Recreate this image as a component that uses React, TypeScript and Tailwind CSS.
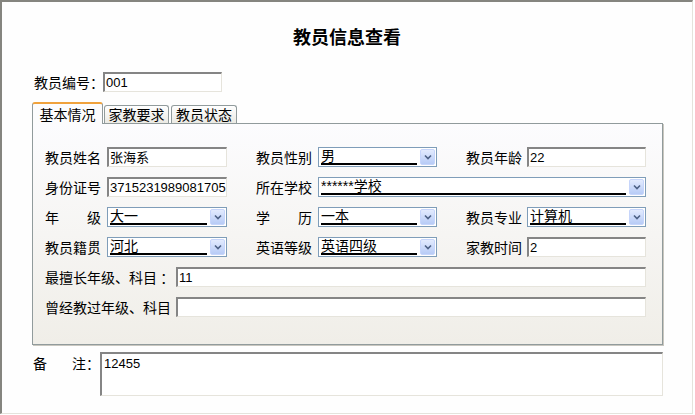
import React from 'react';

const cjk = "font-['Noto_Sans_CJK_SC',sans-serif]";
const mixed = "font-['Liberation_Sans','Noto_Sans_CJK_SC',sans-serif]";

function TextBox({ value, w, h = 'h-[20px]' }: { value: string; w: string; h?: string }) {
  return (
    <div
      className={`${w} ${h} shrink-0 overflow-hidden whitespace-nowrap bg-white border-t-2 border-l-2 border-r border-b border-t-[#858585] border-l-[#858585] border-r-[#e6e4dc] border-b-[#e6e4dc] pl-[1px] text-[13px] leading-[17px] text-black ${mixed}`}
    >
      {value}
    </div>
  );
}

function Select({ value, w }: { value: string; w: string }) {
  return (
    <div className={`${w} h-[20px] shrink-0 flex items-stretch border border-[#7f9db9] bg-white p-[1px]`}>
      <div className={`flex-1 ml-[1px] mr-[3px] overflow-hidden whitespace-nowrap border-b-2 border-b-black text-[14px] leading-[15px] text-black ${mixed}`}>
        {value}
      </div>
      <div className="w-[15px] flex items-center justify-center rounded-[2px] border border-[#c6d5fb] bg-linear-to-b from-[#e3ebfe] to-[#b7cbf6]">
        <svg width="8" height="6" viewBox="0 0 8 6">
          <path d="M1 1.5 L4 4.5 L7 1.5" stroke="#4d6185" strokeWidth="1.6" fill="none" />
        </svg>
      </div>
    </div>
  );
}

function Label({ text, w }: { text: string; w: string }) {
  return <div className={`${w} shrink-0 text-[14px] leading-[20px] text-black whitespace-nowrap ${cjk}`}>{text}</div>;
}

export default function App() {
  return (
    <div className="w-[695px] h-[415px] bg-white overflow-hidden">
      <div className="w-[693px] h-[414px] border-t-2 border-l-2 border-r border-b border-t-[#85857f] border-l-[#85857f] border-r-[#e4e3dc] border-b-[#e4e3dc] bg-[#fefefe]">
        {/* title */}
        <div className={`pt-[22px] text-center text-[18px] leading-[24px] font-bold text-black ${cjk}`}>教员信息查看</div>

        {/* 教员编号 */}
        <div className="mt-[24px] ml-[32px] flex items-center h-[20px]">
          <Label text="教员编号：" w="w-[69px]" />
          <TextBox value="001" w="w-[119px]" />
        </div>

        {/* tabs */}
        <div className="mt-[10px] ml-[30px] flex items-end h-[21px] gap-[1px]">
          <div className={`relative z-10 -mb-px h-[22px] w-[71px] flex items-center justify-center rounded-t-[3px] border-x border-[#919b9c] border-t-2 border-t-[#f0a23c] bg-[#fcfcfd] text-[14px] text-black ${cjk}`}>
            基本情况
          </div>
          <div className={`h-[18px] w-[65px] flex items-center justify-center rounded-t-[3px] border border-b-0 border-[#919b9c] bg-linear-to-b from-white to-[#ebeae4] text-[14px] text-black ${cjk}`}>
            家教要求
          </div>
          <div className={`ml-[1px] h-[18px] w-[66px] flex items-center justify-center rounded-t-[3px] border border-b-0 border-[#919b9c] bg-linear-to-b from-white to-[#ebeae4] text-[14px] text-black ${cjk}`}>
            教员状态
          </div>
        </div>

        {/* panel */}
        <div className="ml-[30px] w-[631px] h-[222px] border border-[#919b9c] shadow-[1px_1px_0_#c9c7bf] bg-linear-to-b from-[#fcfcfe] to-[#f0eee8] pt-[23px] pl-[12px]">
          <div className="flex flex-col gap-[10px]">
            <div className="flex items-center h-[20px]">
              <Label text="教员姓名" w="w-[62px]" />
              <TextBox value="张海系" w="w-[120px]" />
              <div className="w-[29px] shrink-0" />
              <Label text="教员性别" w="w-[62px]" />
              <Select value="男" w="w-[119px]" />
              <div className="w-[29px] shrink-0" />
              <Label text="教员年龄" w="w-[61px]" />
              <TextBox value="22" w="w-[119px]" />
            </div>
            <div className="flex items-center h-[20px]">
              <Label text="身份证号" w="w-[62px]" />
              <TextBox value="371523198908170527" w="w-[120px]" />
              <div className="w-[29px] shrink-0" />
              <Label text="所在学校" w="w-[62px]" />
              <Select value="******学校" w="w-[328px]" />
            </div>
            <div className="flex items-center h-[20px]">
              <Label text="年　　级" w="w-[62px]" />
              <Select value="大一" w="w-[120px]" />
              <div className="w-[29px] shrink-0" />
              <Label text="学　　历" w="w-[62px]" />
              <Select value="一本" w="w-[119px]" />
              <div className="w-[29px] shrink-0" />
              <Label text="教员专业" w="w-[61px]" />
              <Select value="计算机" w="w-[119px]" />
            </div>
            <div className="flex items-center h-[20px]">
              <Label text="教员籍贯" w="w-[62px]" />
              <Select value="河北" w="w-[120px]" />
              <div className="w-[29px] shrink-0" />
              <Label text="英语等级" w="w-[62px]" />
              <Select value="英语四级" w="w-[119px]" />
              <div className="w-[29px] shrink-0" />
              <Label text="家教时间" w="w-[61px]" />
              <TextBox value="2" w="w-[119px]" />
            </div>
            <div className="flex items-center h-[20px]">
              <Label text="最擅长年级、科目 ：" w="w-[131px]" />
              <TextBox value="11" w="w-[470px]" />
            </div>
            <div className="flex items-center h-[20px]">
              <Label text="曾经教过年级、科目" w="w-[131px]" />
              <TextBox value="" w="w-[470px]" />
            </div>
          </div>
        </div>

        {/* 备注 */}
        <div className="mt-[7px] ml-[31px] flex items-start">
          <div className={`w-[67px] shrink-0 flex justify-between pt-[1px] text-[14px] leading-[20px] text-black ${cjk}`}>
            <span>备</span>
            <span>注：</span>
          </div>
          <div
            className={`w-[563px] h-[44px] shrink-0 bg-white border-t-2 border-l-2 border-r border-b border-t-[#858585] border-l-[#858585] border-r-[#e6e4dc] border-b-[#e6e4dc] pl-[2px] pt-[1px] text-[13px] leading-[17px] text-black ${mixed}`}
          >
            12455
          </div>
        </div>
      </div>
    </div>
  );
}
